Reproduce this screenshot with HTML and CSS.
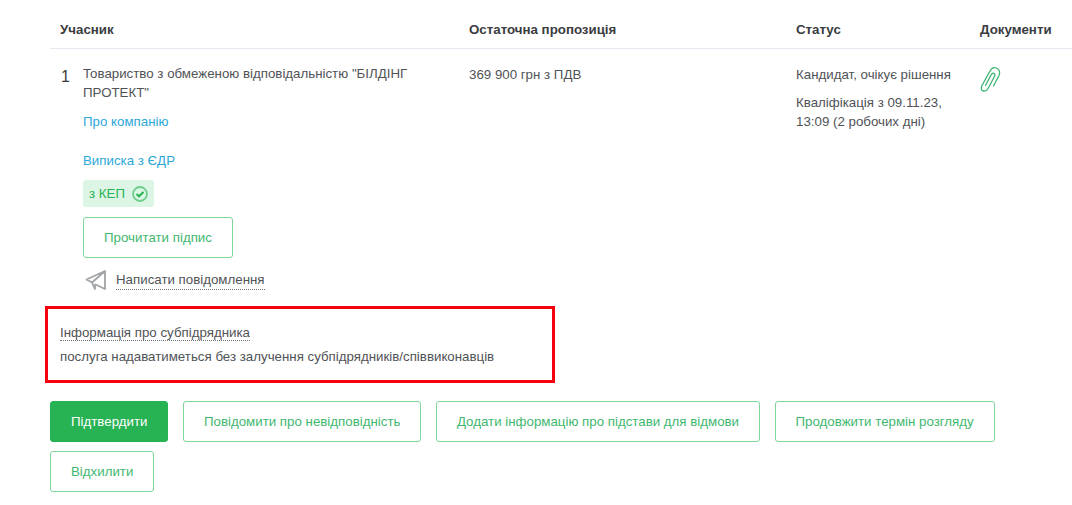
FILE: index.html
```html
<!DOCTYPE html>
<html lang="uk">
<head>
<meta charset="utf-8">
<title>Учасник</title>
<link rel="stylesheet" href="styles.css">
</head>
<body>
<main class="page">
  <div class="row head">
    <div class="cell first">Учасник</div>
    <div class="cell">Остаточна пропозиція</div>
    <div class="cell">Статус</div>
    <div class="cell">Документи</div>
  </div>
  <div class="row body-row">
    <div class="cell first participant">
      <span class="num">1</span>
      <div class="details">
        <div class="name">Товариство з обмеженою відповідальністю "БІЛДІНГ ПРОТЕКТ"</div>
        <a class="link about" href="#">Про компанію</a>
        <a class="link edr" href="#">Виписка з ЄДР</a>
        <span class="badge">з КЕП
          <svg class="badge-icon" viewBox="0 0 16 16" width="16" height="16" aria-hidden="true"><circle cx="8" cy="8" r="7" fill="none" stroke="#27b254" stroke-opacity=".6" stroke-width="1.8"/><path d="M4.6 8.1l2.4 2.3 4.4-4.4" fill="none" stroke="#27b254" stroke-width="2.100"/></svg>
        </span>
        <button class="btn outline sign" type="button">Прочитати підпис</button>
        <div class="message">
          <svg class="send-icon" viewBox="0 0 22 22" width="22" height="22" aria-hidden="true"><path d="M20 2L1.500 10.500l5.500 3L20 2zM7 13.500l3 6.500 0-4.800M20 2l0 18-10-4.800" fill="none" stroke="#a2a5a8" stroke-width="1.800" stroke-linejoin="round"/></svg>
          <span class="dotted">Написати повідомлення</span>
        </div>
      </div>
    </div>
    <div class="cell offer">369 900 грн з ПДВ</div>
    <div class="cell status">
      <div>Кандидат, очікує рішення</div>
      <div class="qual">Кваліфікація з 09.11.23, 13:09 (2 робочих дні)</div>
    </div>
    <div class="cell docs">
      <svg viewBox="0 0 22 26" width="22" height="26" aria-hidden="true"><path d="M14.500 20L20 9.500C21.500 6 20 3 17.500 2 15 1 12.500 2 11 5L3 19.500C1.500 22.500 2.500 24.500 4.500 25 6.500 25.500 8 24.500 9 22.500L15.500 10.500C16.300 9 15.800 7.800 14.800 7.400 13.800 7 12.800 7.500 12 9L6.500 19.500" fill="none" stroke="#3db573" stroke-width="1.300" stroke-linecap="round"/></svg>
    </div>
  </div>
  <section class="subcontractor">
    <div class="sub-title"><span class="dotted">Інформація про субпідрядника</span></div>
    <div class="sub-text">послуга надаватиметься без залучення субпідрядників/співвиконавців</div>
    <div class="highlight"></div>
  </section>
  <div class="actions">
    <button class="btn solid" type="button">Підтвердити</button>
    <button class="btn outline" type="button">Повідомити про невідповідність</button>
    <button class="btn outline" type="button">Додати інформацію про підстави для відмови</button>
    <button class="btn outline" type="button">Продовжити термін розгляду</button>
    <button class="btn outline" type="button">Відхилити</button>
  </div>
</main>
</body>
</html>
```
FILE: styles.css
```css
* { box-sizing: border-box; }
html, body { margin: 0; padding: 0; }
body {
  background: #fff;
  color: #505356;
  font-family: "Liberation Sans", Arial, sans-serif;
  font-size: 13.3px;
  line-height: 19px;
}
.page { width: 1022px; margin-left: 50px; }
.row {
  display: grid;
  grid-template-columns: 419px 327px 184px 1fr;
}
.head {
  height: 49px;
  padding-top: 20px;
  border-bottom: 1px solid #e8e8f0;
  font-weight: 700;
  color: #3a3c3f;
}
.first { padding-left: 10px; }
.body-row { padding-top: 15px; }
.participant { display: flex; }
.num { width: 23px; font-size: 16px; line-height: 26px; color: #3a3c3f; padding-left: 1px; }
.details { width: 340px; display: flex; flex-direction: column; align-items: flex-start; }
.offer { padding-top: 1px; }
.status { padding-top: 1px; padding-right: 10px; }
.qual { margin-top: 9px; }
.docs { padding-top: 2px; }
.docs svg { display: block; margin-left: -1px; }
.link { color: #2ba8d8; text-decoration: none; }
.about { margin-top: 10px; }
.edr { margin-top: 20px; }
.badge {
  display: flex;
  align-items: center;
  gap: 7px;
  height: 27px;
  margin-top: 10px;
  padding: 0 6px;
  border-radius: 3px;
  background: #dcf5e5;
  color: #27b254;
}
.badge-icon { display: block; }
.btn {
  height: 41px;
  padding: 0 20px;
  border: 1px solid #27b254;
  border-radius: 3px;
  font: inherit;
  background: #fff;
  color: #27b254;
}
.outline { border-color: #7ed69b; color: #3fb870; }
.solid { background: #27b254; color: #fff; border-color: #27b254; font-weight: 400; }
.sign { width: 150px; margin-top: 10px; padding: 0; }
.message {
  display: flex;
  align-items: center;
  gap: 9px;
  margin-top: 11px;
  padding-left: 2px;
}
.dotted { border-bottom: 1px dotted #6d7073; }
.subcontractor {
  position: relative;
  margin-top: 15px;
  padding-left: 10px;
  height: 75px;
}
.sub-title { padding-top: 17px; }
.sub-text { margin-top: 5px; }
.highlight {
  position: absolute;
  left: -5px;
  top: 0;
  width: 510px;
  height: 77px;
  border: 3px solid #f5000f;
  pointer-events: none;
}
.actions {
  display: flex;
  flex-wrap: wrap;
  gap: 9.500px 14.500px;
  margin-top: 19.500px;
}
```
